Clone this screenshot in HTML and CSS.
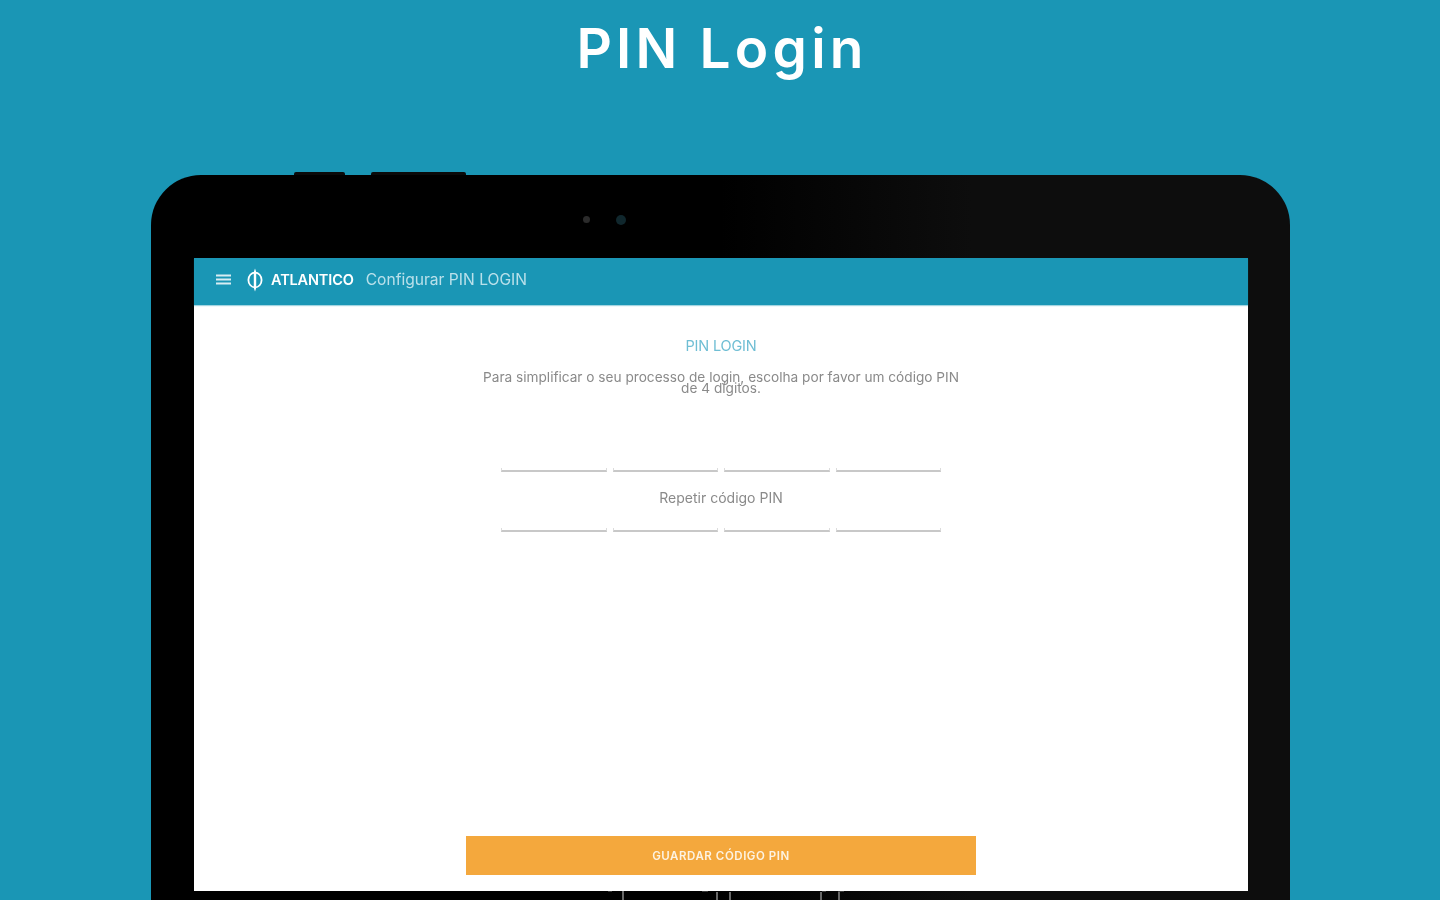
FILE: index.html
```html
<!DOCTYPE html>
<html>
<head>
  <title>PIN Login</title>
  <meta name="viewport" content="width=device-width, initial-scale=1">
  <link rel="stylesheet" href="styles.css">
</head>
<body>

  <div class="page">
    <h1>PIN Login</h1>

    <div class="tablet">
      <span class="side-btn side-btn-a"></span>
      <span class="side-btn side-btn-b"></span>

      <div class="camera-row">
        <span class="sensor"></span>
        <span class="lens"></span>
      </div>

      <div class="screen">
        <!-- Top bar -->
        <div class="topbar">
          <svg class="menu-icon" width="15" height="11" viewBox="0 0 15 11">
            <path d="M0 1.5h15M0 5.5h15M0 9.5h15" stroke="#e3f2f6" stroke-width="2" fill="none"/>
          </svg>
          <svg class="logo-icon" width="18" height="24" viewBox="0 0 18 24">
            <ellipse cx="9" cy="12" rx="6.6" ry="7.4" stroke="#fff" stroke-width="1.8" fill="none"/>
            <path d="M9 0.5L10.2 4V20L9 23.5L7.8 20V4Z" fill="#fff"/>
          </svg>
          <span class="brand">ATLANTICO</span>
          <span class="topbar-title">Configurar PIN LOGIN</span>
        </div>

        <!-- Form -->
        <div class="form">
          <h2>PIN LOGIN</h2>
          <p class="intro">Para simplificar o seu processo de login, escolha por favor um código PIN de 4 dígitos.</p>

          <div class="pin-row pin-row-first">
            <span class="pin-cell"></span>
            <span class="pin-cell"></span>
            <span class="pin-cell"></span>
            <span class="pin-cell"></span>
          </div>

          <div class="repeat-label">Repetir código PIN</div>

          <div class="pin-row pin-row-second">
            <span class="pin-cell"></span>
            <span class="pin-cell"></span>
            <span class="pin-cell"></span>
            <span class="pin-cell"></span>
          </div>

          <button class="save-btn"><span class="save-label">GUARDAR CÓDIGO PIN</span></button>
        </div>
      </div>

      <!-- Bits of the nav bar that show under the screen -->
      <svg class="nav-marks" width="300" height="9" viewBox="0 0 300 9">
        <path d="M71 0v9M165 1v8M178 1v8M269 1v8M287 1v8" stroke="#8a8a8a" stroke-width="1.5" fill="none"/>
        <path d="M56 0h4M150 0h6M270 0h4M286 0h6" stroke="#777" stroke-width="1" fill="none"/>
      </svg>
    </div>
  </div>

</body>
</html>
```

FILE: styles.css
```css
html, body {
  margin: 0;
  height: 100%;
}

body {
  font-family: 'Inter', 'Liberation Sans', sans-serif;
  background-color: #1a96b5;
  overflow: hidden;
}

.page {
  height: 900px;
  overflow: hidden;
  display: flex;
  flex-direction: column;
  align-items: center;
}

h1 {
  flex: none;
  margin: 14px 0 0;
  height: 161px;
  font-size: 55px;
  line-height: 68px;
  font-weight: 600;
  letter-spacing: 4.2px;
  text-indent: 4px;
  color: #fff;
  text-align: center;
  filter: blur(0.6px);
}

.tablet {
  position: relative;
  flex: none;
  box-sizing: border-box;
  width: 1139px;
  height: 760px;
  margin-left: 1px;
  padding: 0 42px 0 43px;
  border-radius: 50px 50px 0 0;
  background: linear-gradient(90deg, #000 0%, #000 50%, #0d0d0d 72%, #0d0d0d 100%);
}

.side-btn {
  position: absolute;
  top: -3px;
  height: 3px;
  background: #0a0a0a;
  border-radius: 2px 2px 0 0;
}

.side-btn-a {
  left: 143px;
  width: 51px;
}

.side-btn-b {
  left: 220px;
  width: 95px;
}

.camera-row {
  height: 83px;
  box-sizing: border-box;
  padding: 40px 0 0 389px;
  display: flex;
  align-items: flex-start;
  gap: 26px;
}

.sensor {
  width: 7px;
  height: 7px;
  margin-top: 1px;
  border-radius: 50%;
  background: #2b2b2b;
}

.lens {
  width: 10px;
  height: 10px;
  border-radius: 50%;
  background: #10272d;
}

.screen {
  height: 633px;
  display: flex;
  flex-direction: column;
  background: #fff;
}

.topbar {
  box-sizing: border-box;
  height: 47px;
  flex: none;
  display: flex;
  align-items: center;
  padding: 0 0 4px 22px;
  background: #1a96b5;
  box-shadow: 0 1px 1px rgba(26, 150, 181, 0.4);
}

.menu-icon {
  flex: none;
  opacity: 0.95;
}

.logo-icon {
  flex: none;
  margin-left: 15px;
}

.brand {
  margin-left: 7px;
  font-size: 14.5px;
  font-weight: 600;
  letter-spacing: -0.15px;
  color: #fff;
  filter: blur(0.7px);
}

.topbar-title {
  margin-left: 12px;
  font-size: 15.6px;
  color: #b9e0ea;
  filter: blur(0.7px);
}

.form {
  flex: 1;
  display: flex;
  flex-direction: column;
  align-items: center;
}

h2 {
  margin: 33px 0 0;
  font-size: 14.5px;
  line-height: 16px;
  font-weight: 400;
  letter-spacing: -0.2px;
  color: #6fbed4;
  filter: blur(0.7px);
}

.intro {
  width: 490px;
  margin: 18px 0 0;
  font-size: 13.65px;
  line-height: 11px;
  text-align: center;
  color: #8a8a8a;
  filter: blur(0.7px);
}

.pin-row {
  display: flex;
  gap: 6px;
}

.pin-row-first {
  margin-top: 74px;
}

.pin-row-second {
  margin-top: 22px;
}

.pin-cell {
  box-sizing: border-box;
  width: 105.5px;
  height: 4px;
  border: 1px solid #dcdcdc;
  border-top: none;
  border-bottom: 2px solid #c8c8c8;
}

.repeat-label {
  margin-top: 18px;
  font-size: 14px;
  line-height: 16px;
  color: #8a8a8a;
  filter: blur(0.7px);
}

.save-btn {
  width: 510px;
  height: 39px;
  margin-top: auto;
  margin-bottom: 16px;
  padding: 0;
  border: none;
  background-color: #f4a83d;
  cursor: pointer;
}

.save-label {
  font-family: 'Inter', 'Liberation Sans', sans-serif;
  font-size: 11.5px;
  font-weight: 600;
  letter-spacing: 0.55px;
  color: #fdf3e2;
  filter: blur(0.6px);
  display: inline-block;
}

.nav-marks {
  position: absolute;
  left: 401px;
  top: 716px;
}
```
